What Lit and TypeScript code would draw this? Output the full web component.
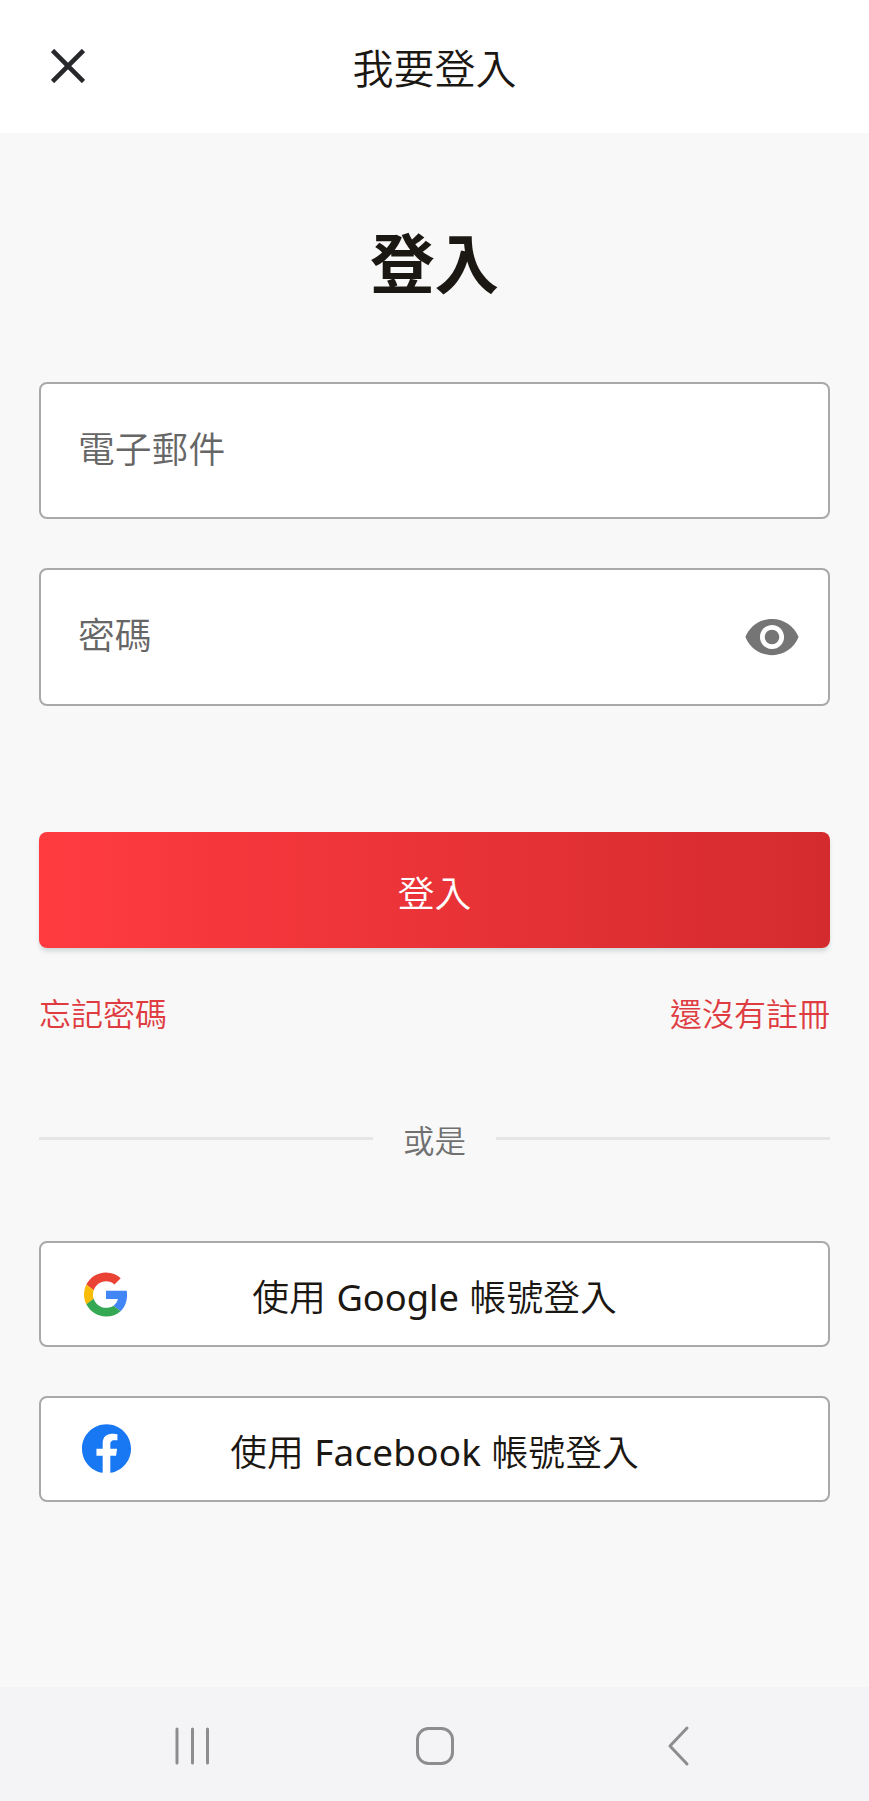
import { LitElement, html, css, svg } from "lit";
import { customElement } from "lit/decorators.js";

const closeIcon = svg`<svg class="close" viewBox="0 0 34 34"><path d="M1.5 1.5 32.5 32.5M32.5 1.5 1.5 32.5" fill="none" stroke="#26282c" stroke-width="4.7"/></svg>`;
const eyeIcon = svg`<svg class="eye" viewBox="0 0 24 24"><path fill="#757575" d="M12 4.5C7 4.5 2.73 7.61 1 12c1.73 4.39 6 7.5 11 7.5s9.27-3.11 11-7.5c-1.73-4.39-6-7.5-11-7.5zM12 17c-2.76 0-5-2.24-5-5s2.24-5 5-5 5 2.24 5 5-2.24 5-5 5zm0-8c-1.66 0-3 1.34-3 3s1.34 3 3 3 3-1.34 3-3-1.34-3-3-3z"/></svg>`;
const googleIcon = svg`<svg class="google" viewBox="0 0 48 48"><path fill="#EA4335" d="M24 9.5c3.54 0 6.71 1.22 9.21 3.6l6.85-6.85C35.9 2.38 30.47 0 24 0 14.62 0 6.51 5.38 2.56 13.22l7.98 6.19C12.43 13.72 17.74 9.5 24 9.5z"/><path fill="#4285F4" d="M46.98 24.55c0-1.57-.15-3.09-.38-4.55H24v9.02h12.94c-.58 2.96-2.26 5.48-4.78 7.18l7.73 6c4.51-4.18 7.09-10.36 7.09-17.65z"/><path fill="#FBBC05" d="M10.53 28.59c-.48-1.45-.76-2.99-.76-4.59s.27-3.14.76-4.59l-7.98-6.19C.92 16.46 0 20.12 0 24c0 3.88.92 7.54 2.56 10.78l7.97-6.19z"/><path fill="#34A853" d="M24 48c6.48 0 11.93-2.13 15.89-5.81l-7.73-6c-2.15 1.45-4.92 2.3-8.16 2.3-6.26 0-11.57-4.22-13.47-9.91l-7.98 6.19C6.51 42.62 14.62 48 24 48z"/></svg>`;
const facebookIcon = svg`<svg class="facebook" viewBox="0 0 24 24"><path fill="#1877F2" d="M24 12.073c0-6.627-5.373-12-12-12s-12 5.373-12 12c0 5.99 4.388 10.954 10.125 11.854v-8.385H7.078v-3.47h3.047V9.43c0-3.007 1.792-4.669 4.533-4.669 1.312 0 2.686.235 2.686.235v2.953H15.83c-1.491 0-1.956.925-1.956 1.874v2.25h3.328l-.532 3.47h-2.796v8.385C19.612 23.027 24 18.062 24 12.073z"/></svg>`;

@customElement("app-root")
export class AppRoot extends LitElement {
  static styles = css`
    :host {
      display: flex;
      flex-direction: column;
      height: 1801px;
      background: #f8f8f8;
      color: #1b1712;
      font-family: "Noto Sans CJK TC", sans-serif;
      font-size: 36.8px;
      font-weight: 350;
      line-height: 1;
    }
    svg { display: block; flex: none; }
    * { box-sizing: border-box; }
    header {
      display: grid;
      grid-template-columns: 1fr auto 1fr;
      height: 133px;
      background: #fff;
      padding: 46px 51px 0;
    }
    .close { width: 34px; height: 34px; margin-top: 3px; }
    .title { font-size: 41px; }
    main {
      display: flex;
      flex-direction: column;
      flex: 1;
      padding: 95px 39px 0;
    }
    h1 {
      margin: 0 0 90px;
      font-size: 64.5px;
      line-height: 64px;
      font-weight: 700;
      text-align: center;
    }
    .field, .social {
      border: 2px solid #a9a9a9;
      border-radius: 8px;
      background: #fff;
    }
    .field {
      display: flex;
      align-items: center;
      justify-content: space-between;
      height: 138px;
      padding: 0 27px 0 37px;
      margin-bottom: 49px;
      color: #666;
    }
    .field.email { height: 137px; }
    .label { padding-bottom: 7px; }
    .eye { width: 58px; height: 58px; }
    .submit {
      display: flex;
      align-items: center;
      justify-content: center;
      height: 116px;
      margin-top: 77px;
      padding-top: 2px;
      border-radius: 8px;
      background: linear-gradient(90deg, #ff3b40, #d42b2f);
      box-shadow: 0 4px 5px -1px rgba(60, 90, 90, 0.22);
      color: #fff;
    }
    .links {
      display: flex;
      justify-content: space-between;
      margin-top: 48px;
      font-size: 32px;
      color: #df3c42;
    }
    .or {
      display: flex;
      align-items: center;
      justify-content: space-between;
      margin-top: 94px;
      height: 32px;
      font-size: 31.5px;
      color: #707070;
    }
    .rule { width: 334px; height: 3px; background: #e6e6e6; }
    .or-text { padding-top: 4px; }
    .social {
      display: grid;
      grid-template-columns: 64px 1fr 64px;
      align-items: center;
      height: 106px;
      padding: 0 34px 0 33px;
      margin-top: 49px;
    }
    .social.first { margin-top: 87px; }
    .mark { display: flex; justify-content: center; }
    .google { width: 44px; height: 45px; }
    .facebook { width: 49px; height: 49px; margin-bottom: 2px; }
    .social-text { text-align: center; white-space: nowrap; padding: 5px 0 0 1px; }
    .latin { font-family: "Noto Sans", sans-serif; font-weight: 400; font-size: 36.3px; word-spacing: 1.2px; }
    .latin.wide { font-size: 36.9px; letter-spacing: 0.2px; word-spacing: 0.6px; }
    nav {
      height: 114px;
      background: #f4f4f7;
      display: grid;
      grid-template-columns: 38px 42px 24px;
      align-items: center;
      column-gap: 202px;
      padding: 3px 0 0 174px;
    }
    .back { margin-left: 8px; }
    .nav-icon { height: 42px; fill: none; stroke: #8d8d8f; stroke-width: 3; stroke-linecap: round; stroke-linejoin: round; }
  `;

  render() {
    return html`
      <header>${closeIcon}<span class="title">我要登入</span></header>
      <main>
        <h1>登入</h1>
        <div class="field email"><span class="label">電子郵件</span></div>
        <div class="field"><span class="label">密碼</span>${eyeIcon}</div>
        <div class="submit" role="button">登入</div>
        <div class="links"><span>忘記密碼</span><span>還沒有註冊</span></div>
        <div class="or"><div class="rule"></div><span class="or-text">或是</span><div class="rule"></div></div>
        <div class="social first" role="button">
          <span class="mark">${googleIcon}</span>
          <span class="social-text">使用<span class="latin"> Google </span>帳號登入</span>
        </div>
        <div class="social" role="button">
          <span class="mark">${facebookIcon}</span>
          <span class="social-text">使用<span class="latin wide"> Facebook </span>帳號登入</span>
        </div>
      </main>
      <nav>
        <svg class="nav-icon" width="38" viewBox="0 0 38 42"><path d="M3 4V38M18.5 4V38M33.5 4V38"/></svg>
        <svg class="nav-icon" width="42" viewBox="0 0 42 42"><rect x="3.5" y="3.5" width="35" height="35" rx="11"/></svg>
        <svg class="nav-icon back" width="24" viewBox="0 0 24 42"><path d="M21 3 4 21 21 39"/></svg>
      </nav>
    `;
  }
}
